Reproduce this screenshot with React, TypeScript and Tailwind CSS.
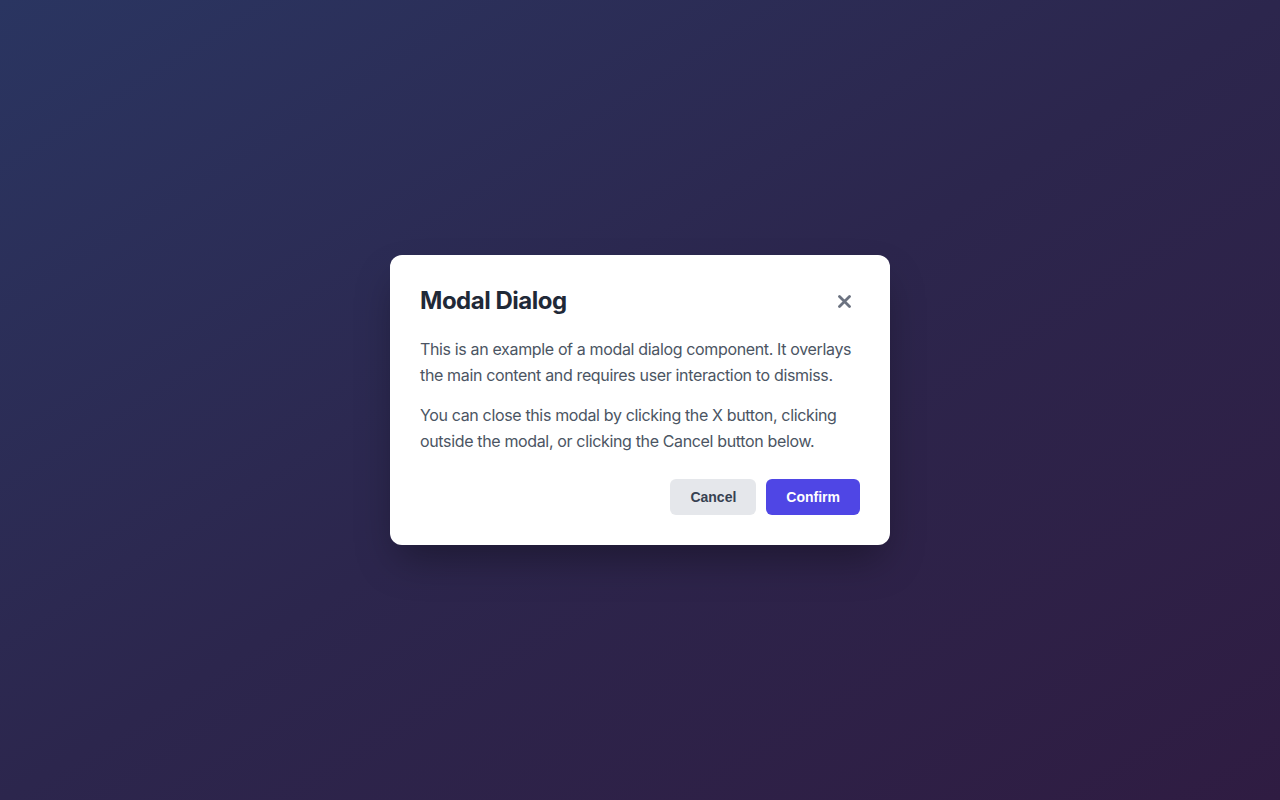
export default function App() {
  return (
    <div className="min-h-screen w-full flex items-center justify-center bg-gradient-to-br from-[#2a3561] via-[#2c264d] to-[#2f1c42] font-['Inter',sans-serif]">
      <div className="w-[500px] bg-white rounded-xl p-[30px] shadow-[0_20px_40px_-8px_rgba(0,0,0,0.35)]">
        <div className="flex items-center justify-between">
          <h2 className="text-2xl leading-8 font-bold tracking-[-0.02em] text-[#1f2937]">Modal Dialog</h2>
          <button className="w-8 h-8 flex items-center justify-center text-[#6b7280]">
            <svg width="13" height="13" viewBox="0 0 13 13" fill="none">
              <path d="M1.5 1.5L11.5 11.5M11.5 1.5L1.5 11.5" stroke="currentColor" strokeWidth="2.8" strokeLinecap="round" />
            </svg>
          </button>
        </div>
        <div className="mt-[19px] text-base leading-[26px] tracking-[-0.022em] text-[#4b5563]">
          <p className="mb-[14px]">
            This is an example of a modal dialog component. It overlays the main content and requires user interaction to dismiss.
          </p>
          <p>
            You can close this modal by clicking the X button, clicking outside the modal, or clicking the Cancel button below.
          </p>
        </div>
        <div className="mt-[25px] flex justify-end gap-[10px] font-['Liberation_Sans',Arial,sans-serif]">
          <button className="h-9 px-5 rounded-md bg-[#e5e7eb] text-[#374151] text-sm font-bold">Cancel</button>
          <button className="h-9 px-5 rounded-md bg-[#4f46e5] text-white text-sm font-bold">Confirm</button>
        </div>
      </div>
    </div>
  );
}
